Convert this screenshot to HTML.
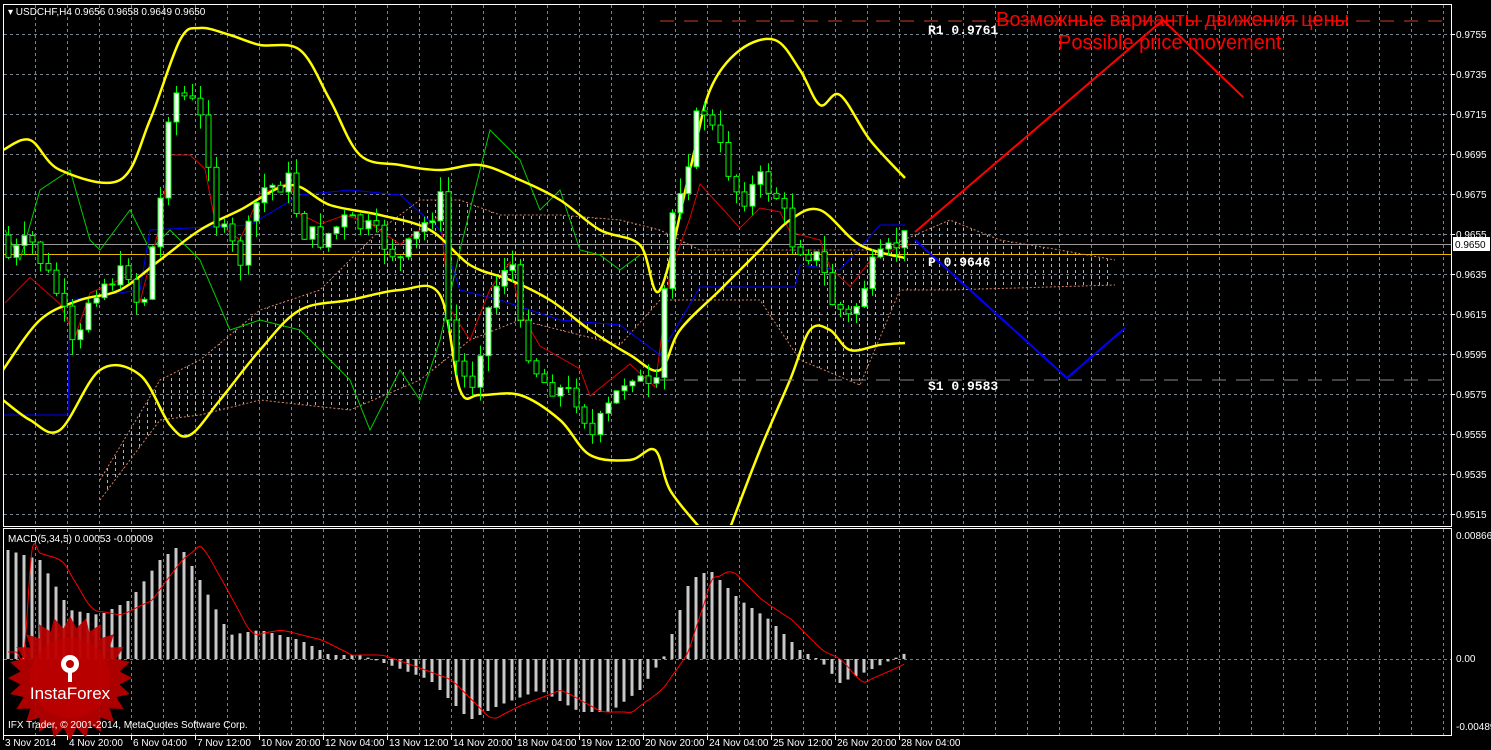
<!DOCTYPE html>
<html><head><meta charset="utf-8">
<style>
html,body{margin:0;padding:0;background:#000;width:1491px;height:750px;overflow:hidden}
svg{display:block;font-family:"Liberation Sans",sans-serif}
.ax{fill:#fff;font-size:10px}
</style></head><body>
<svg id="s" width="1491" height="750" xmlns="http://www.w3.org/2000/svg">
<defs>
<pattern id="hatch" width="8" height="6" patternUnits="userSpaceOnUse">
<rect x="3" y="0" width="1" height="3" fill="#f0b890"/>
</pattern>
<clipPath id="main"><rect x="4" y="5" width="1447" height="520"/></clipPath>
<clipPath id="mc"><rect x="4" y="530" width="1447" height="205"/></clipPath>
</defs>
<g id="grid"></g>
<rect x="3.5" y="4.5" width="1448" height="522" fill="none" stroke="#fff"/>
<rect x="3.5" y="528.5" width="1448" height="207" fill="none" stroke="#fff"/>
<g id="cloud" clip-path="url(#main)"></g>
<g id="ind" clip-path="url(#main)"></g>
<g id="candles" clip-path="url(#main)"></g>
<g id="macd" clip-path="url(#mc)"></g>
<g id="ax"></g>
<text x="8" y="15" fill="#fff" font-size="10">▾ USDCHF,H4  0.9656 0.9658 0.9649 0.9650</text>
<text x="8" y="542" fill="#fff" font-size="10">MACD(5,34,5) 0.00053 -0.00009</text>
<line x1="660" y1="21" x2="1451" y2="21" stroke="#c84020" stroke-dasharray="14,10"/>
<line x1="660" y1="380" x2="1451" y2="380" stroke="#888" stroke-dasharray="14,10"/>
<text x="928" y="34" fill="#fff" font-family="Liberation Mono,monospace" font-size="13" font-weight="bold">R1 0.9761</text>
<text x="928" y="266" fill="#fff" font-family="Liberation Mono,monospace" font-size="13" font-weight="bold">P 0.9646</text>
<text x="928" y="390" fill="#fff" font-family="Liberation Mono,monospace" font-size="13" font-weight="bold">S1 0.9583</text>
<polyline points="915,232 1163,20 1243,97" fill="none" stroke="#f00" stroke-width="2"/>
<polyline points="915,240 1067,378 1125,328" fill="none" stroke="#00f" stroke-width="2"/>
<text x="996" y="26" fill="#f00" font-size="20">Возможные варианты движения цены</text>
<text x="1058" y="49" fill="#f00" font-size="20">Possible price movement</text>
<g transform="translate(70,678)">
<polygon id="star" fill="#b00" opacity="0.92"/>
<circle r="40" fill="#c20000" opacity="0.6"/>
<g fill="#fff"><circle cx="0" cy="-14" r="9"/><circle cx="0" cy="-14" r="4" fill="#b00"/><rect x="-2" y="-10" width="4" height="14"/></g>
<text x="0" y="21" text-anchor="middle" fill="#fff" font-size="17">InstaForex</text>
</g>
<text x="8" y="728" fill="#fff" font-size="10">IFX Trader, © 2001-2014, MetaQuotes Software Corp.</text>
</svg>
<script>
var NS="http://www.w3.org/2000/svg";
function el(p,t,a){var e=document.createElementNS(NS,t);for(var k in a)e.setAttribute(k,a[k]);document.getElementById(p).appendChild(e);return e;}
function pts(a){return a.map(function(p){return p[0]+","+p[1]}).join(" ");}
function smooth(a){var d="M"+a[0][0]+","+a[0][1];for(var i=0;i<a.length-1;i++){var p0=a[Math.max(0,i-1)],p1=a[i],p2=a[i+1],p3=a[Math.min(a.length-1,i+2)];
d+=" C"+(p1[0]+(p2[0]-p0[0])/6)+","+(p1[1]+(p2[1]-p0[1])/6)+" "+(p2[0]-(p3[0]-p1[0])/6)+","+(p2[1]-(p3[1]-p1[1])/6)+" "+p2[0]+","+p2[1];}return d;}
function interp(a,x){for(var i=0;i<a.length-1;i++){if(x>=a[i][0]&&x<=a[i+1][0]){var t=(x-a[i][0])/(a[i+1][0]-a[i][0]);return a[i][1]+t*(a[i+1][1]-a[i][1]);}}return a[a.length-1][1];}
for(var x=35;x<1451;x+=32){el("grid","line",{x1:x+.5,y1:5,x2:x+.5,y2:526,stroke:"#7a8290","stroke-dasharray":"3,3"});el("grid","line",{x1:x+.5,y1:529,x2:x+.5,y2:735,stroke:"#7a8290","stroke-dasharray":"3,3"});}
for(var i=0;i<13;i++){var y=34+i*40;el("grid","line",{x1:4,y1:y+.5,x2:1451,y2:y+.5,stroke:"#7a8290","stroke-dasharray":"3,3"});
var t=el("ax","text",{x:1456,y:y+4,"class":"ax"});t.textContent=(0.9755-i*0.002).toFixed(4);el("ax","line",{x1:1451,y1:y+.5,x2:1455,y2:y+.5,stroke:"#fff"});}
el("grid","line",{x1:4,y1:659.5,x2:1451,y2:659.5,stroke:"#7a8290","stroke-dasharray":"3,3"});
[["0.00866",539],["0.00",662],["-0.00489",730]].forEach(function(a){var t=el("ax","text",{x:1456,y:a[1],"class":"ax"});t.textContent=a[0];});
el("grid","line",{x1:4,y1:244.5,x2:1451,y2:244.5,stroke:"#999"});
el("grid","line",{x1:4,y1:254.5,x2:1451,y2:254.5,stroke:"#e8b800"});
el("ax","rect",{x:1453,y:237,width:37,height:14,fill:"#fff"});
var tt=el("ax","text",{x:1455,y:248,fill:"#000","font-size":"10"});tt.textContent="0.9650";
var labs=["3 Nov 2014","4 Nov 20:00","6 Nov 04:00","7 Nov 12:00","10 Nov 20:00","12 Nov 04:00","13 Nov 12:00","14 Nov 20:00","18 Nov 04:00","19 Nov 12:00","20 Nov 20:00","24 Nov 04:00","25 Nov 12:00","26 Nov 20:00","28 Nov 04:00"];
labs.forEach(function(l,i){var x=3+i*64;var t=el("ax","text",{x:x+2,y:746,"class":"ax"});t.textContent=l;el("ax","line",{x1:x+.5,y1:736,x2:x+.5,y2:740,stroke:"#fff"});});
var cu=[[100,480],[160,380],[200,360],[260,310],[320,290],[380,230],[420,200],[460,200],[500,215],[560,215],[620,220],[660,230],[700,250],[760,250],[820,250],[880,250],[950,220],[1000,240],[1060,250],[1115,260]];
var cl=[[100,500],[160,420],[200,415],[260,400],[350,410],[420,380],[470,340],[520,320],[560,330],[620,345],[660,300],[700,300],[760,300],[800,360],[860,385],[900,290],[950,290],[1115,285]];
el("cloud","polygon",{points:pts(cu.concat(cl.slice().reverse())),fill:"url(#hatch)",opacity:"0.9"});
el("cloud","polyline",{points:pts(cu),fill:"none",stroke:"#d08060","stroke-dasharray":"2,2"});
el("cloud","polyline",{points:pts(cl),fill:"none",stroke:"#d08060","stroke-dasharray":"2,2"});
var P=[[5,260],[30,240],[60,300],[75,360],[90,290],[130,270],[140,320],[160,200],[170,90],[190,100],[205,130],[215,220],[240,260],[260,190],[290,180],[300,230],[320,240],[345,220],[370,230],[400,260],[440,200],[450,350],[470,390],[490,300],[510,250],[520,330],[540,380],[580,400],[590,440],[630,370],[655,400],[670,220],[690,150],[700,100],[720,150],[740,200],[760,180],[780,200],[790,240],[820,260],[830,300],[850,320],[870,270],[900,240],[910,235]];
var up=[[3,150],[30,140],[60,170],[120,180],[150,120],[180,40],[200,28],[230,35],[260,45],[300,50],[330,100],[360,155],[400,165],[440,170],[480,165],[520,180],[560,200],[600,230],[640,245],[660,290],[690,170],[710,90],[740,50],[775,40],[800,70],[820,105],[840,95],[870,140],[905,178]];
var mid=[[3,370],[40,320],[80,300],[120,290],[160,260],[200,230],[240,210],[290,185],[330,205],[380,215],[430,230],[470,265],[510,280],[550,300],[590,330],[630,355],[660,370],[680,330],[720,290],[760,250],[790,220],[820,210],[860,245],[905,258]];
var lo1=[[3,400],[30,420],[60,430],[100,370],[140,375],[170,425],[190,435],[220,400],[260,350],[300,310],[350,300],[400,290],[440,295],[460,390],[480,395],[520,395],[560,420],[590,455],[630,460],[655,450],[670,490],[700,528]];
var lo2=[[730,528],[760,450],[790,380],[810,330],[830,330],[850,350],[880,345],[905,343]];
var blue=[[3,415],[68,415],[70,300],[140,290],[150,230],[250,225],[300,195],[350,190],[400,195],[440,230],[460,290],[500,300],[560,320],[620,325],[660,355],[700,287],[795,287],[800,265],[840,270],[880,225],[905,225]];
var green=[[5,230],[20,260],[40,190],[70,170],[90,240],[100,250],[130,210],[150,250],[170,230],[200,260],[230,330],[260,320],[300,330],[330,360],[350,380],[370,430],[400,370],[420,400],[440,340],[460,250],[490,130],[520,160],[540,210],[560,190],[580,250],[600,255],[620,270],[640,255]];
var red=P.map(function(p){return [p[0],p[1]*0.6+interp(mid,p[0])*0.4];});
el("ind","polyline",{points:pts(green),fill:"none",stroke:"#0c0"});
el("ind","polyline",{points:pts(blue),fill:"none",stroke:"#00f"});
el("ind","polyline",{points:pts(red),fill:"none",stroke:"#d00"});
[up,mid,lo1,lo2].forEach(function(a){el("ind","path",{d:smooth(a),fill:"none",stroke:"#ff0","stroke-width":"2.5"});});
var seed=7;function rnd(){seed=(seed*9301+49297)%233280;return seed/233280;}
var prev=interp(P,4);
for(var x=8;x<=908;x+=8){var c=interp(P,x)+(rnd()-.5)*22;var o=prev;var hi=Math.min(o,c)-rnd()*16;var lw=Math.max(o,c)+rnd()*16;
el("candles","line",{x1:x+.5,y1:hi,x2:x+.5,y2:lw,stroke:"#0f0"});
var t=Math.min(o,c),h=Math.max(1,Math.abs(o-c));
el("candles","rect",{x:x-2,y:t,width:5,height:h,fill:c<o?"#fff":"#000",stroke:"#0f0","stroke-width":"1"});prev=c;}
var M=[[8,550],[40,560],[70,610],[100,615],[130,600],[160,560],[180,545],[200,580],[230,635],[260,630],[300,640],[330,655],[360,655],[390,665],[430,680],[470,720],[500,705],[540,690],[580,712],[610,712],[640,690],[665,655],[690,580],[710,570],[740,600],[770,620],[800,650],[820,660],[840,683],[870,670],[908,652]];
var sig=[];
for(var x=8;x<=908;x+=8){var v=interp(M,x);el("macd","rect",{x:x-1.5,y:Math.min(v,659),width:3,height:Math.abs(v-659),fill:"#c8c8c8"});sig.push([x,interp(M,x-22)]);}
el("macd","path",{d:smooth(sig),fill:"none",stroke:"#f00"});
var s=[];for(var i=0;i<48;i++){var r=i%2?50:62;var a=i*Math.PI/24;s.push([r*Math.cos(a),r*Math.sin(a)]);}
document.getElementById("star").setAttribute("points",pts(s));
</script>
</body></html>
